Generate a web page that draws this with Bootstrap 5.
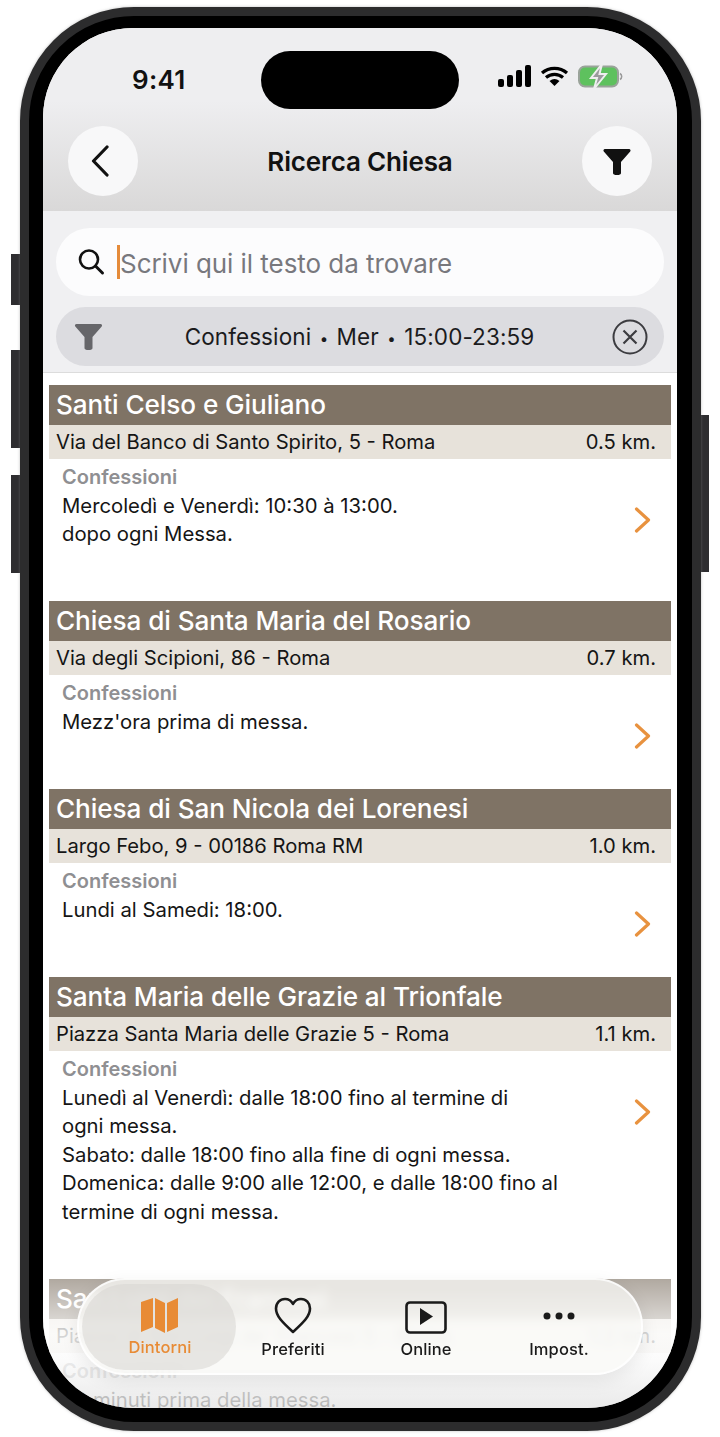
<!DOCTYPE html>
<html lang="it"><head><meta charset="utf-8">
<link href="https://cdn.jsdelivr.net/npm/bootstrap@5.3.0/dist/css/bootstrap.min.css" rel="stylesheet">
<script src="https://cdn.jsdelivr.net/npm/bootstrap@5.3.0/dist/js/bootstrap.bundle.min.js"></script>
<style>
html,body{margin:0;height:1437px;background:#fff;overflow:hidden}
body{font-family:Inter,"Liberation Sans",sans-serif;color:#111}
.stage{position:relative;width:720px;height:1437px}
.bezel{position:absolute;left:20px;top:7px;width:681px;height:1424px;border-radius:114px;background:#000;border:9px solid #2c2c2d;box-shadow:0 0 3px #8888}
.sidekey{position:absolute;background:#2e2d30;width:9px}
.key-a{left:11px;top:254px;height:51px}
.key-b{left:11px;top:350px;height:98px}
.key-c{left:11px;top:475px;height:98px}
.key-d{left:700px;top:415px;height:157px}
.screen{position:absolute;left:43px;top:28px;width:634px;height:1380px;border-radius:90px;overflow:hidden;background:#fff}
.island{position:absolute;left:218px;top:23px;width:198px;height:58px;border-radius:29px;background:#000}
.topbar{height:183px;background:linear-gradient(#eeeef0 0,#eeeef0 40%,#d9d8d8 100%);padding:0 25px}
.clock{font-size:26px;font-weight:600;padding-left:64px;line-height:1;letter-spacing:.3px}
.statusrow{height:98px;padding-top:39px}
.statusicons{margin:-3px 29px 0 0}
.circlebtn{width:70px;height:70px;border-radius:50%;background:#f8f8f9}
.backglyph{margin-right:6px}
.navtitle{font-size:26px;font-weight:600;letter-spacing:-.15px;margin-top:1px}
.searcharea{height:162px;background:#f0f0f2;border-bottom:1px solid #dcdcdc;padding:17px 13px 0}
.searchpill{height:68px;border-radius:34px;background:#fcfcfd;padding-left:21px}
.caretbar{width:3px;height:34px;background:#e58b3a;margin-left:12px}
.hinttext{font-size:26px;color:#78787d;letter-spacing:-.05px;padding-top:3px}
.filterpill{height:59px;margin-top:11px;border-radius:30px;background:#dcdce0;padding:0 16px 0 18px}
.filtertext{font-size:22.5px;color:#1b1b1d;letter-spacing:.1px;margin-left:4px}
.dotsep{font-size:15px;margin:0 2px;vertical-align:1px}
.reslist{padding:12px 6px 0}
.churchtitle{background:#7f7365;color:#fff;font-size:26.200px;font-weight:500;height:40px;line-height:40px;padding-left:7px;letter-spacing:-.1px}
.churchaddr{background:#e7e2da;height:34px;font-size:20.200px;padding:1px 15px 0 7px;color:#151515}
.churchbody{padding:4px 0 0 13px;position:relative;line-height:28.500px;font-size:20.300px;color:#151515}
.kindlabel{color:#8f8f92;font-weight:600;font-size:20px}
.chev{position:absolute;right:20px;top:48px}
.fadeout{position:absolute;left:0;right:0;top:1215px;height:165px;background:linear-gradient(rgba(255,255,255,0) 0,rgba(255,255,255,.4) 23%,rgba(255,255,255,.82) 55%,rgba(250,250,250,.85) 72%,rgba(228,228,228,.78) 100%)}
.tabbar{position:absolute;left:34px;top:1250px;width:566px;height:97px;border-radius:48px;background:rgba(250,249,247,.72);backdrop-filter:blur(5px);border:2px solid rgba(255,255,255,.75);box-shadow:0 6px 18px rgba(0,0,0,.08)}
.tabitem{width:100px;font-size:16.500px;font-weight:500;color:#1a1a1a;line-height:1;letter-spacing:.1px;margin-left:33px;padding-top:3px}
.tabfirst{width:154px;height:86px;border-radius:43px;background:rgba(215,213,209,.55);color:#e88b35;margin-left:3px;padding:0 0 0 2px}
.tabsecond{margin-left:7px}
.tabicon{height:38px}
.heartglyph{margin:-2px 0 2px}
.mapglyph{margin:-1px 0 1px}
.bodyrow1{height:142px}.bodyrow2{height:114px}.bodyrow4{height:228px}
</style></head><body>
<div class="stage">
 <div class="sidekey key-a"></div>
 <div class="sidekey key-b"></div>
 <div class="sidekey key-c"></div>
 <div class="sidekey key-d"></div>
 <div class="bezel"></div>
 <div class="screen">
  <div class="topbar">
   <div class="statusrow d-flex justify-content-between align-items-start">
    <div class="clock">9:41</div>
    <svg class="statusicons" width="125" height="26" viewBox="0 0 125 26">
     <rect x="0" y="15" width="6" height="8" rx="2"/><rect x="9" y="11" width="6" height="12" rx="2"/><rect x="18" y="6" width="6" height="17" rx="2"/><rect x="27" y="1" width="6" height="22" rx="2"/>
     <path d="M44 9a19 19 0 0 1 25 0M48 13.500a13 13 0 0 1 17 0" fill="none" stroke="#000" stroke-width="3.200"/><path d="M51.500 17a8 8 0 0 1 10 0l-5 5z"/>
     <rect x="81" y="2.500" width="39" height="20" rx="6" fill="#5ec15e" stroke="#9aa39a" stroke-width="2"/><path d="M122 9.500a3.500 3.500 0 0 1 0 6" fill="none" stroke="#999" stroke-width="1.500"/>
     <path d="M104 0l-11 14h6l-3 11 12-15h-6.500z" fill="#9a9a9c" stroke="#eee" stroke-width="2"/>
    </svg>
   </div>
   <div class="d-flex justify-content-between align-items-center">
    <div class="circlebtn d-flex align-items-center justify-content-center">
     <svg class="backglyph" width="20" height="32" viewBox="0 0 20 32"><path d="M17 2 3.500 16 17 30" fill="none" stroke="#111" stroke-width="3.200" stroke-linecap="round" stroke-linejoin="round"/></svg>
    </div>
    <div class="navtitle">Ricerca Chiesa</div>
    <div class="circlebtn d-flex align-items-center justify-content-center">
     <svg width="28" height="27" viewBox="0 0 28 27"><path d="M2 1h24c1.500 0 2 1.500 1.200 2.500L18 14v11c0 1.500-1.500 2-4 2s-4-.5-4-2V14L.8 3.500C0 2.500.5 1 2 1z" fill="#111"/></svg>
    </div>
   </div>
  </div>
  <div class="island"></div>
  <div class="searcharea">
   <div class="searchpill d-flex align-items-center">
    <svg width="28" height="28" viewBox="0 0 28 28"><circle cx="12" cy="11.500" r="9" fill="none" stroke="#111" stroke-width="2.600"/><path d="m18.500 18 7 7" stroke="#111" stroke-width="3" stroke-linecap="round"/></svg>
    <span class="caretbar"></span><span class="hinttext">Scrivi qui il testo da trovare</span>
   </div>
   <div class="filterpill d-flex align-items-center justify-content-between">
    <svg width="29" height="27" viewBox="0 0 28 27"><path d="M2 1h24c1.500 0 2 1.500 1.200 2.500L18 14v11c0 1.500-1.500 2-4 2s-4-.5-4-2V14L.8 3.500C0 2.500.5 1 2 1z" fill="#66666a"/></svg>
    <span class="filtertext">Confessioni <span class="dotsep">•</span> Mer <span class="dotsep">•</span> 15:00-23:59</span>
    <svg width="36" height="36" viewBox="0 0 36 36"><circle cx="18" cy="18" r="16.500" fill="none" stroke="#3c3c40" stroke-width="2"/><path d="m11.500 11.500 13 13m0-13-13 13" stroke="#3c3c40" stroke-width="2.200"/></svg>
   </div>
  </div>
  <div class="reslist">
   <div class="churchtitle">Santi Celso e Giuliano</div>
   <div class="churchaddr d-flex justify-content-between align-items-center"><span>Via del Banco di Santo Spirito, 5 - Roma</span><span>0.5 km.</span></div>
   <div class="churchbody bodyrow1"><div class="kindlabel">Confessioni</div>Mercoledì e Venerdì: 10:30 à 13:00.<br>dopo ogni Messa.
    <svg class="chev" width="17" height="26" viewBox="0 0 17 26"><path d="m2.500 2 12 11-12 11" fill="none" stroke="#e8923f" stroke-width="3.200" stroke-linecap="round" stroke-linejoin="round"/></svg></div>
   <div class="churchtitle">Chiesa di Santa Maria del Rosario</div>
   <div class="churchaddr d-flex justify-content-between align-items-center"><span>Via degli Scipioni, 86 - Roma</span><span>0.7 km.</span></div>
   <div class="churchbody bodyrow2"><div class="kindlabel">Confessioni</div>Mezz'ora prima di messa.
    <svg class="chev" width="17" height="26" viewBox="0 0 17 26"><path d="m2.500 2 12 11-12 11" fill="none" stroke="#e8923f" stroke-width="3.200" stroke-linecap="round" stroke-linejoin="round"/></svg></div>
   <div class="churchtitle">Chiesa di San Nicola dei Lorenesi</div>
   <div class="churchaddr d-flex justify-content-between align-items-center"><span>Largo Febo, 9 - 00186 Roma RM</span><span>1.0 km.</span></div>
   <div class="churchbody bodyrow2"><div class="kindlabel">Confessioni</div>Lundi al Samedi: 18:00.
    <svg class="chev" width="17" height="26" viewBox="0 0 17 26"><path d="m2.500 2 12 11-12 11" fill="none" stroke="#e8923f" stroke-width="3.200" stroke-linecap="round" stroke-linejoin="round"/></svg></div>
   <div class="churchtitle">Santa Maria delle Grazie al Trionfale</div>
   <div class="churchaddr d-flex justify-content-between align-items-center"><span>Piazza Santa Maria delle Grazie 5 - Roma</span><span>1.1 km.</span></div>
   <div class="churchbody bodyrow4"><div class="kindlabel">Confessioni</div>Lunedì al Venerdì: dalle 18:00 fino al termine di<br>ogni messa.<br>Sabato: dalle 18:00 fino alla fine di ogni messa.<br>Domenica: dalle 9:00 alle 12:00, e dalle 18:00 fino al<br>termine di ogni messa.
    <svg class="chev" width="17" height="26" viewBox="0 0 17 26"><path d="m2.500 2 12 11-12 11" fill="none" stroke="#e8923f" stroke-width="3.200" stroke-linecap="round" stroke-linejoin="round"/></svg></div>
   <div class="churchtitle">San Luigi dei Francesi</div>
   <div class="churchaddr d-flex justify-content-between align-items-center"><span>Piazza di San Luigi de' Francesi 5 - Roma</span><span>1.2 km.</span></div>
   <div class="churchbody"><div class="kindlabel">Confessioni</div>30 minuti prima della messa.</div>
  </div>
  <div class="fadeout"></div>
  <div class="tabbar d-flex align-items-center">
   <div class="tabitem tabfirst d-flex flex-column align-items-center justify-content-center gap-1">
    <svg class="tabicon mapglyph" width="40" height="38" viewBox="0 0 40 38"><path d="M1 6 13 2v29L1 36zM15 2l10 5v30l-10-5zM27 7l11-5v29l-11 5z" fill="#e88b35"/></svg>Dintorni</div>
   <div class="tabitem tabsecond d-flex flex-column align-items-center gap-1">
    <svg class="tabicon heartglyph" width="38" height="38" viewBox="0 0 38 38"><path d="M19 35C8 25 2 19 2 11.500 2 6 6 2 11 2c3.500 0 6.500 2 8 5 1.500-3 4.500-5 8-5 5 0 9 4 9 9.500C36 19 30 25 19 35z" fill="none" stroke="#1a1a1a" stroke-width="2.600" stroke-linejoin="round"/></svg>Preferiti</div>
   <div class="tabitem d-flex flex-column align-items-center gap-1">
    <svg class="tabicon" width="42" height="34" viewBox="0 0 42 34"><rect x="1.500" y="0" width="39" height="30" rx="3.500" fill="none" stroke="#1a1a1a" stroke-width="2.600" transform="translate(0 1.500)"/><path d="M15 7v17l13-8.500z" fill="#1a1a1a"/></svg>Online</div>
   <div class="tabitem d-flex flex-column align-items-center gap-1">
    <svg class="tabicon" width="34" height="34" viewBox="0 0 34 34"><circle cx="5" cy="15" r="3.500" fill="#1a1a1a"/><circle cx="17" cy="15" r="3.500" fill="#1a1a1a"/><circle cx="29" cy="15" r="3.500" fill="#1a1a1a"/></svg>Impost.</div>
  </div>
 </div>
</div>
</body></html>
